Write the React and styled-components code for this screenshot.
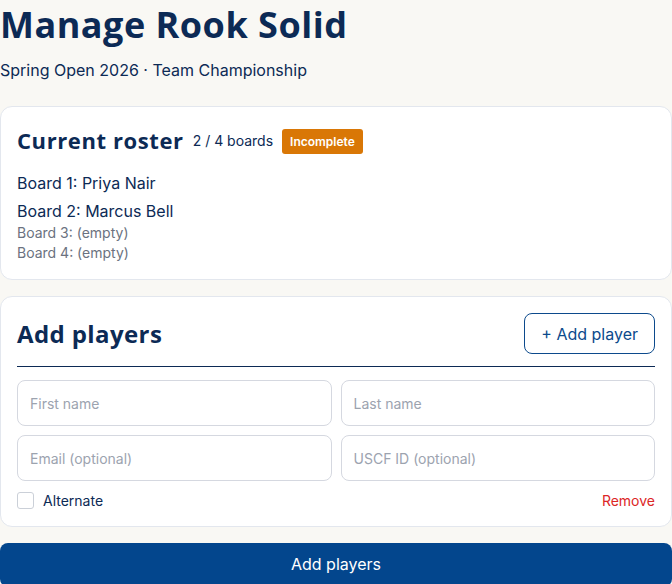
import React from 'react'
import styled, { createGlobalStyle } from 'styled-components'

const GlobalStyle = createGlobalStyle`
  body {
    margin: 0;
    background: #f9f8f4;
    font-family: Inter, "Noto Sans", sans-serif;
    color: #0c2a55;
  }
`

const Page = styled.div`
  display: flex;
  flex-direction: column;
`

const Title = styled.h1`
  margin: 0;
  font-family: "Open Sans", sans-serif;
  font-weight: 700;
  font-size: 36px;
  letter-spacing: 0.5px;
  line-height: 50px;
  color: #0c2a55;
`

const Subtitle = styled.div`
  font-size: 16px;
  line-height: 24px;
  margin-top: 8px;
  margin-bottom: 24px;
`

const Card = styled.section`
  background: #fff;
  border: 1px solid #e3e7ee;
  border-radius: 12px;
  padding: 16px;
  margin-bottom: 16px;
`

const CardTitle = styled.h2`
  margin: 0;
  font-family: "Open Sans", sans-serif;
  font-weight: 700;
  font-size: ${p => p.$size || 22}px;
  letter-spacing: ${p => p.$spacing || 0.6}px;
  color: #0c2a55;
`

const RosterHead = styled.div`
  display: flex;
  align-items: center;
  gap: 9px;
  height: 33px;
  margin-bottom: 15px;
`

const Count = styled.span`
  font-size: 14px;
  margin-top: 2px;
`

const Badge = styled.span`
  background: #d97706;
  color: #fff;
  font-size: 12px;
  font-weight: 600;
  padding: 5px 8px;
  border-radius: 3px;
  margin-top: 4px;
`

const Slot = styled.div`
  font-size: ${p => (p.$empty ? 14 : 16)}px;
  line-height: ${p => (p.$empty ? 20 : 24)}px;
  color: ${p => (p.$empty ? '#6b7280' : '#0c2a55')};
  margin-top: ${p => (p.$empty ? 0 : 4)}px;
`

const AddHead = styled.div`
  display: flex;
  align-items: center;
  justify-content: space-between;
  padding-bottom: 12px;
  border-bottom: 1px solid #0c2a55;
  margin-bottom: 13px;
`

const OutlineButton = styled.button`
  height: 41px;
  padding: 0 16px;
  background: #fff;
  border: 1px solid #0c4a8c;
  border-radius: 8px;
  color: #0c4a8c;
  font-family: Inter, sans-serif;
  font-size: 16px;
`

const Fields = styled.div`
  display: grid;
  grid-template-columns: 1fr 1fr;
  gap: 9px;
`

const Input = styled.input`
  box-sizing: border-box;
  height: 46px;
  width: 100%;
  padding: 0 12px;
  border: 1px solid #d5d8e0;
  border-radius: 8px;
  font-family: Inter, sans-serif;
  font-size: 14px;
  color: #0c2a55;
  &::placeholder {
    color: #9ca3af;
  }
`

const OptionRow = styled.div`
  display: flex;
  align-items: center;
  justify-content: space-between;
  margin-top: 9px;
  height: 20px;
`

const CheckLabel = styled.label`
  display: flex;
  align-items: center;
  gap: 9px;
  font-size: 14px;
`

const Box = styled.span`
  width: 17px;
  height: 17px;
  border: 1.5px solid #cbd0d8;
  border-radius: 3px;
  box-sizing: border-box;
`

const Remove = styled.span`
  font-size: 14px;
  color: #dc2626;
`

const Submit = styled.button`
  height: 44px;
  width: 100%;
  background: #03468d;
  color: #fff;
  border: none;
  border-radius: 8px;
  font-family: Inter, sans-serif;
  font-size: 16px;
  padding-bottom: 4px;
`

const App = () => {
  return (
    <Page>
      <GlobalStyle />
      <Title>Manage Rook Solid</Title>
      <Subtitle>Spring Open 2026 · Team Championship</Subtitle>

      <Card>
        <RosterHead>
          <CardTitle>Current roster</CardTitle>
          <Count>2 / 4 boards</Count>
          <Badge>Incomplete</Badge>
        </RosterHead>
        <Slot>Board 1: Priya Nair</Slot>
        <Slot>Board 2: Marcus Bell</Slot>
        <Slot $empty>Board 3: (empty)</Slot>
        <Slot $empty>Board 4: (empty)</Slot>
      </Card>

      <Card>
        <AddHead>
          <CardTitle $size={24} $spacing={0.4}>Add players</CardTitle>
          <OutlineButton>+ Add player</OutlineButton>
        </AddHead>
        <Fields>
          <Input placeholder="First name" />
          <Input placeholder="Last name" />
          <Input placeholder="Email (optional)" />
          <Input placeholder="USCF ID (optional)" />
        </Fields>
        <OptionRow>
          <CheckLabel>
            <Box />
            Alternate
          </CheckLabel>
          <Remove>Remove</Remove>
        </OptionRow>
      </Card>

      <Submit>Add players</Submit>
    </Page>
  )
}

export default App
